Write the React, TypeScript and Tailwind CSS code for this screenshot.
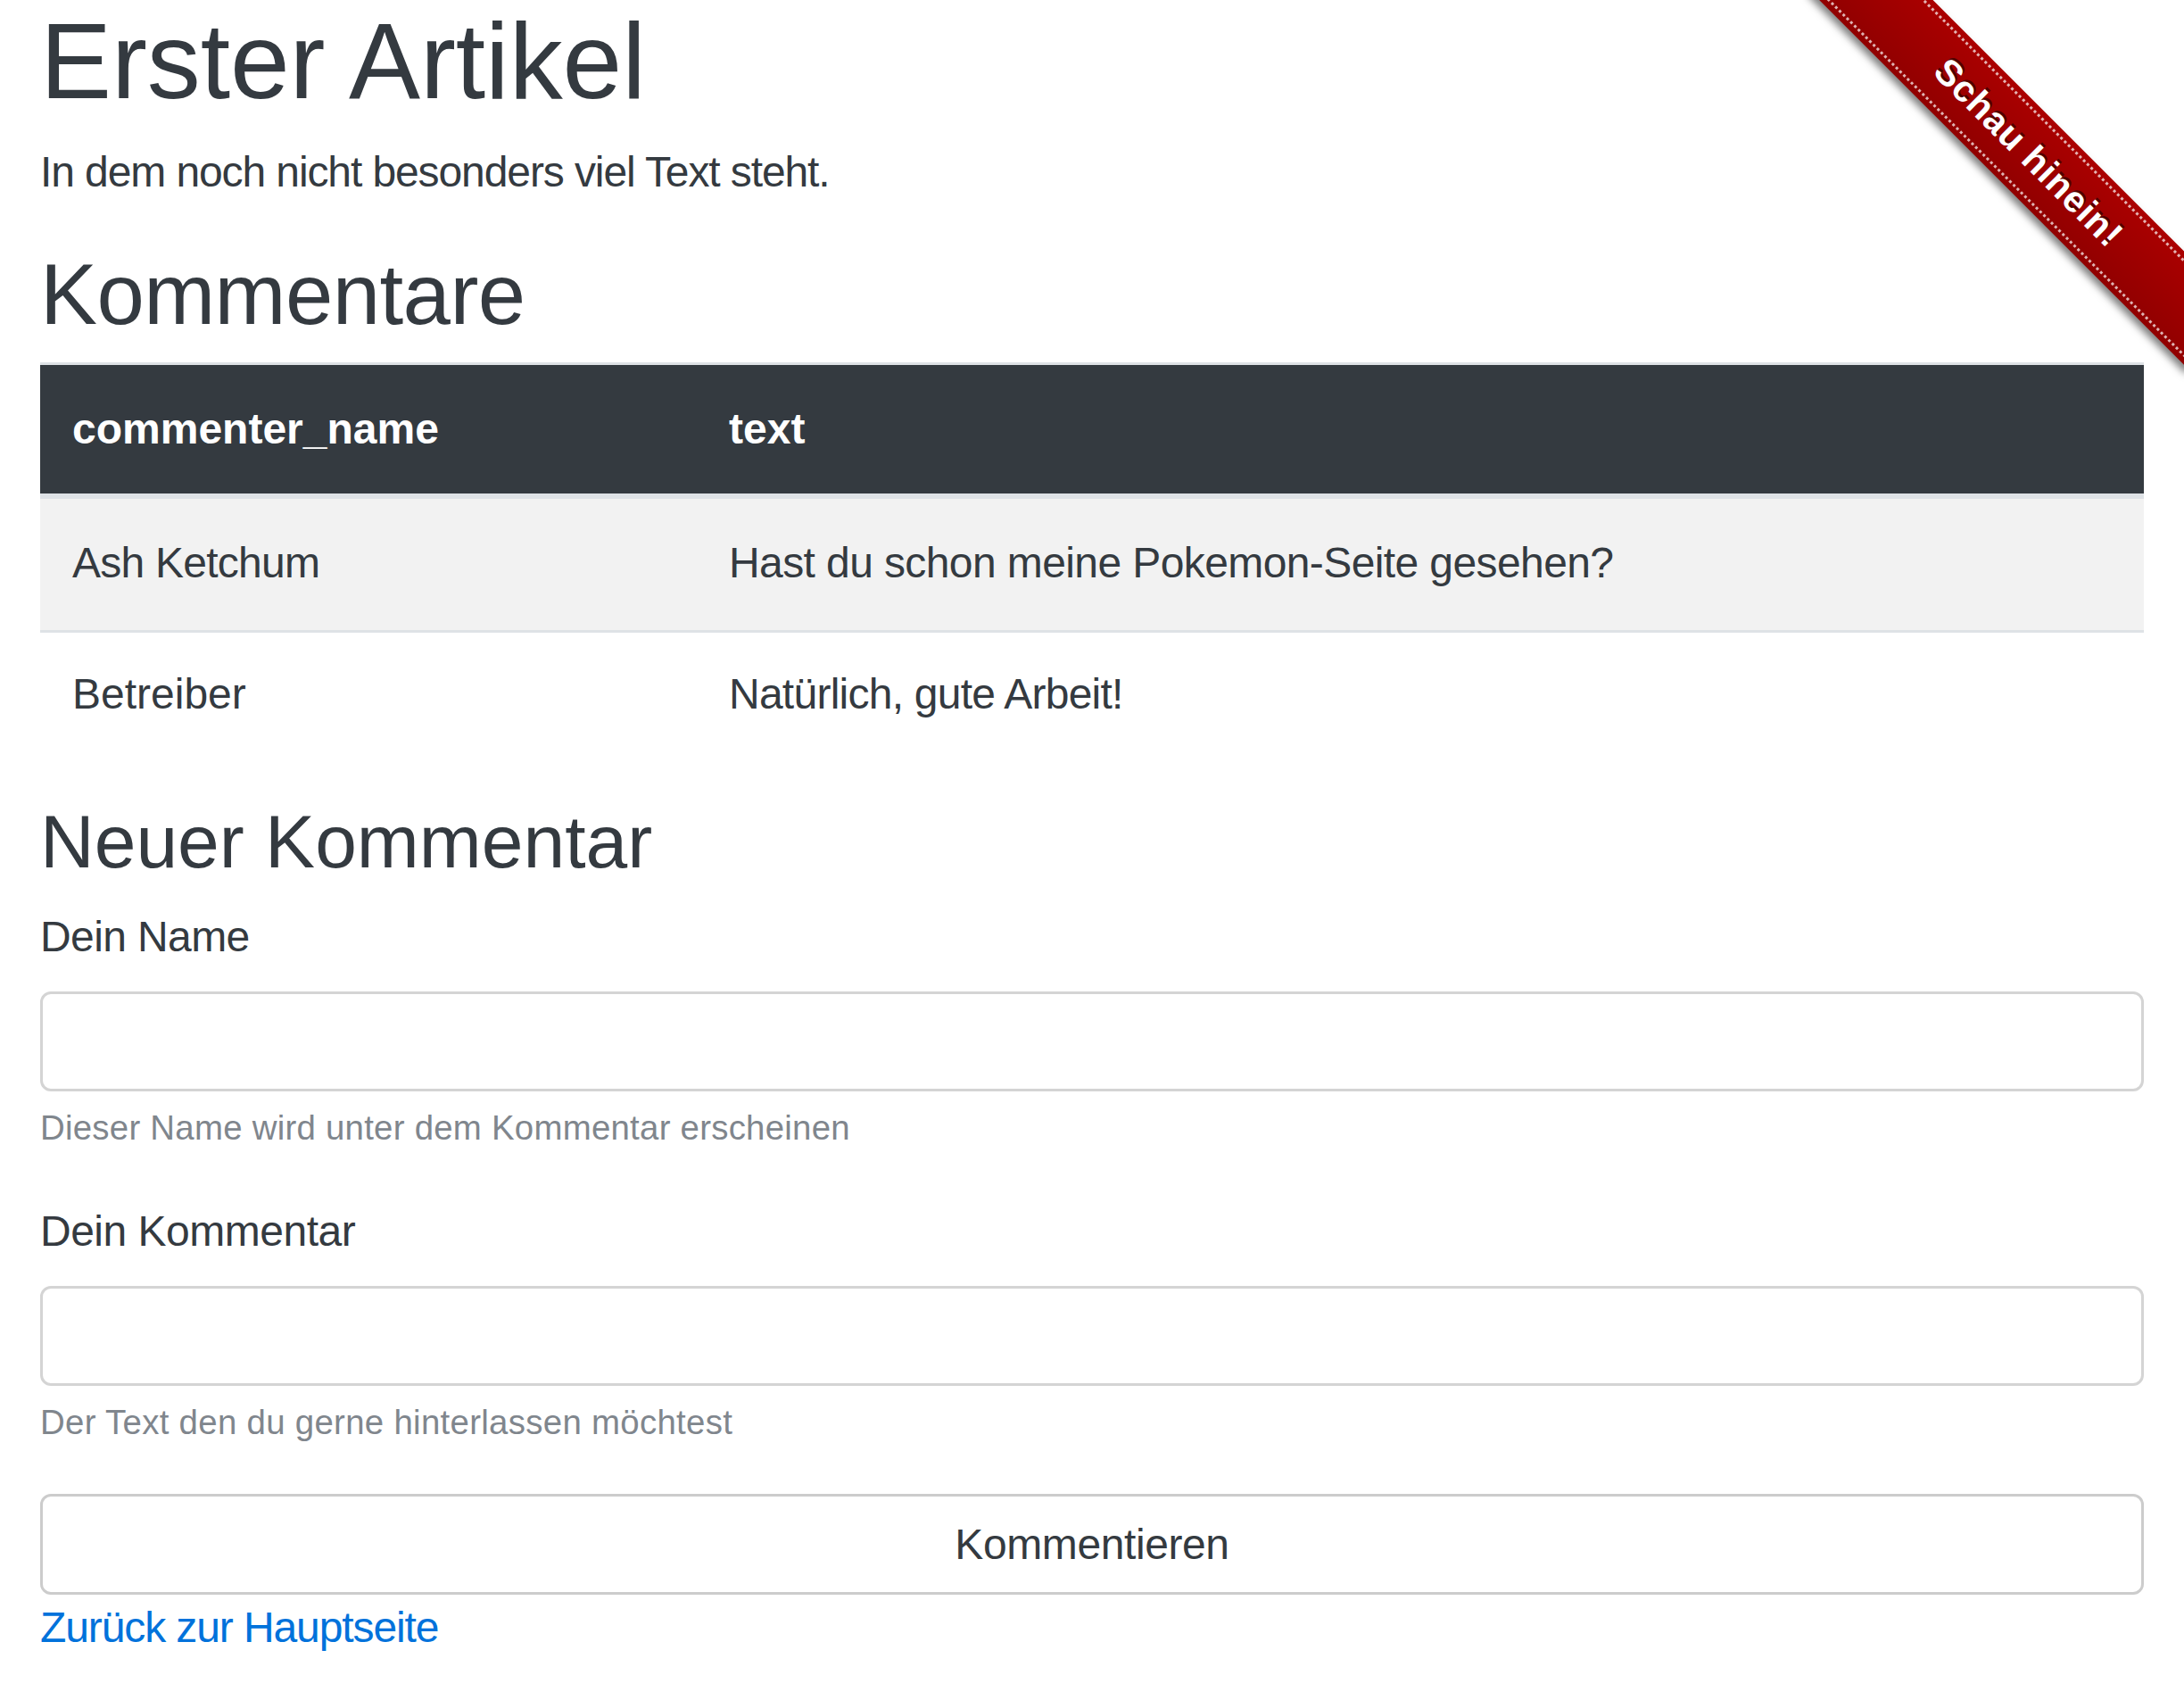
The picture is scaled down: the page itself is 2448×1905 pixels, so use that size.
import React from "react";

const font = "font-['Liberation_Sans',Arial,Helvetica,sans-serif]";

function Ribbon() {
  return (
    <div className="absolute top-0 right-0 w-[472px] h-[472px] overflow-hidden pointer-events-none">
      <div className="absolute box-content w-[599.8px] h-[60.06px] py-[14.82px] top-[126px] right-[-126px] rotate-45 bg-[#aa0000] bg-[linear-gradient(to_bottom,rgba(0,0,0,0),rgba(0,0,0,0.15))] shadow-[0_5.85px_8.97px_0_rgba(0,0,0,0.5)]" />
      <div className="absolute box-content w-[599.8px] h-[60.06px] leading-[60.06px] py-[5.85px] my-[5.85px] top-[126px] right-[-126px] rotate-45 border-y-[3.12px] border-dotted border-[rgba(255,255,255,0.7)] text-center text-white font-bold text-[41px] tracking-[0.8px] [text-shadow:0_-3px_rgba(0,0,0,0.5)]">
        Schau hinein!
      </div>
    </div>
  );
}

export default function App() {
  return (
    <div className={`relative min-h-screen w-full bg-white text-[#343a40] ${font}`}>
      <Ribbon />
      <div className="px-[45px]">
        <h1 className="text-[120px] leading-[136.8px] font-normal tracking-[-0.1px] mb-[20.6px]">
          Erster Artikel
        </h1>
        <p className="text-[48px] leading-[72px] tracking-[-1.1px] mb-[42.4px]">
          In dem noch nicht besonders viel Text steht.
        </p>
        <h2 className="text-[96px] leading-[115.2px] font-normal tracking-[-0.6px] mb-[19px]">
          Kommentare
        </h2>

        <div className="w-full mb-[40.2px] text-[48px] leading-[72px]">
          <div className="border-t-[3px] border-[#dee2e6]" />
          <div className="grid grid-cols-[736px_1fr] bg-[#343a40] text-white font-bold">
            <div className="px-[36px] py-[36px]">commenter_name</div>
            <div className="px-[36px] py-[36px]">text</div>
          </div>
          <div className="h-[6px] bg-[#dee2e6]" />
          <div className="grid grid-cols-[736px_1fr] bg-[#f2f2f2] tracking-[-0.75px]">
            <div className="px-[36px] pt-[36px] pb-[39px]">Ash Ketchum</div>
            <div className="px-[36px] pt-[36px] pb-[39px] tracking-[-0.6px]">
              Hast du schon meine Pokemon-Seite gesehen?
            </div>
          </div>
          <div className="grid grid-cols-[736px_1fr] border-t-[3px] border-[#dee2e6] tracking-[-0.75px]">
            <div className="px-[36px] pt-[33.5px] pb-[38.5px] tracking-[0px]">Betreiber</div>
            <div className="px-[36px] pt-[33.5px] pb-[38.5px]">Natürlich, gute Arbeit!</div>
          </div>
        </div>

        <h3 className="text-[84px] leading-[100.8px] font-normal tracking-[0px] mb-[20.1px]">
          Neuer Kommentar
        </h3>

        <form className="flex flex-col" onSubmit={(e) => e.preventDefault()}>
          <label className="block text-[48px] leading-[72px] tracking-[-0.6px] mb-[24.9px]">
            Dein Name
          </label>
          <input
            type="text"
            className="block w-full h-[112px] border-[3px] border-[#d4d4d4] rounded-[12px] bg-white px-[36px] text-[48px] outline-none"
          />
          <small className="block mt-[11.6px] text-[38.4px] leading-[57.6px] tracking-[0.25px] text-[#80868d]">
            Dieser Name wird unter dem Kommentar erscheinen
          </small>

          <label className="block mt-[51.7px] text-[48px] leading-[72px] tracking-[-0.5px] mb-[25.1px]">
            Dein Kommentar
          </label>
          <input
            type="text"
            className="block w-full h-[112px] border-[3px] border-[#d4d4d4] rounded-[12px] bg-white px-[36px] text-[48px] outline-none"
          />
          <small className="block mt-[11.9px] text-[38.4px] leading-[57.6px] tracking-[0.3px] text-[#80868d]">
            Der Text den du gerne hinterlassen möchtest
          </small>

          <button
            type="submit"
            className="mt-[52px] w-full h-[112.5px] border-[3px] border-[#cccccc] rounded-[12px] bg-white text-[48px] leading-[72px] tracking-[-0.4px] text-[#343a40]"
          >
            Kommentieren
          </button>
        </form>

        <a href="#" className="block mt-[0.9px] text-[48px] leading-[72px] tracking-[-1.1px] text-[#0072db] no-underline w-fit">
          Zurück zur Hauptseite
        </a>
      </div>
    </div>
  );
}
